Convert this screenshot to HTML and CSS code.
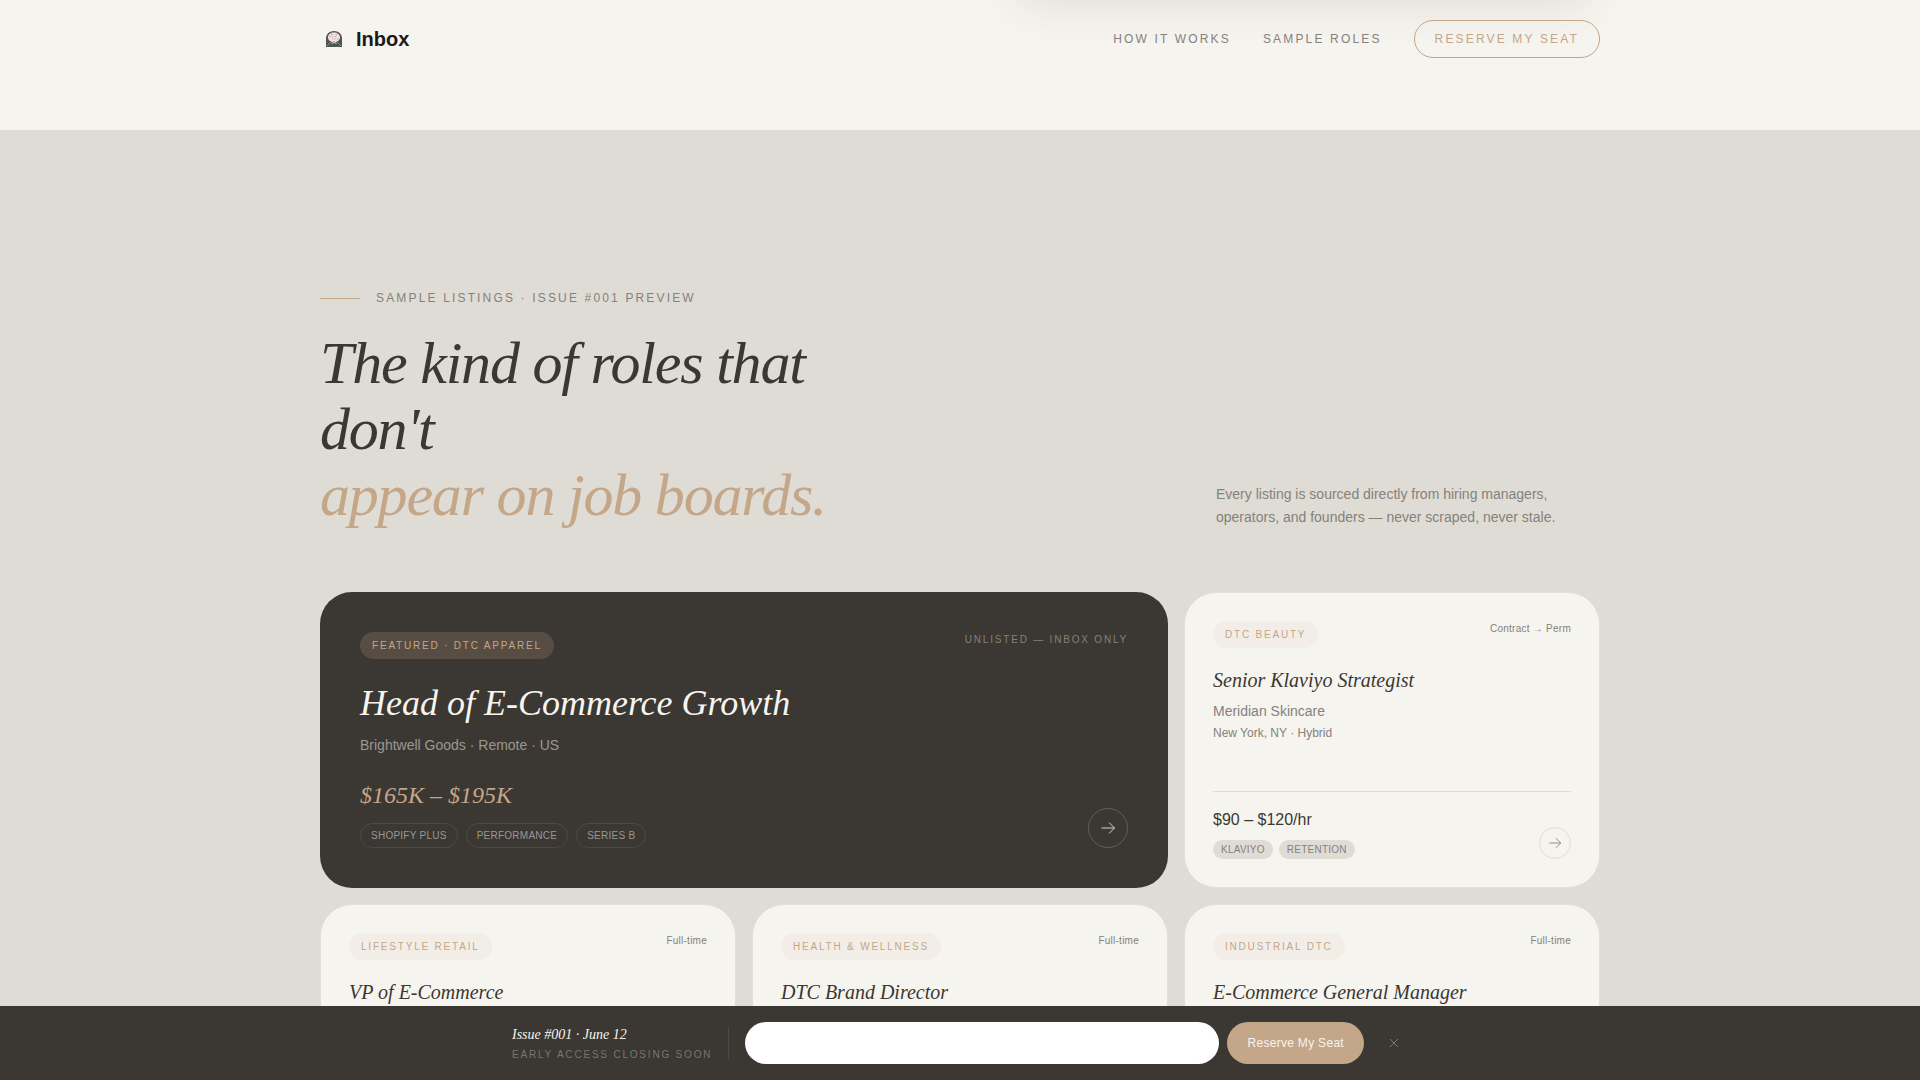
FILE: index.html
```html
<!DOCTYPE html>
<html lang="en">
<head>
    <meta charset="UTF-8">
    <meta name="viewport" content="width=device-width, initial-scale=1.0">
    <title>Inbox</title>
    <link rel="stylesheet" href="styles.css">
</head>
<body>
    <div class="hero-end"></div>

    <header class="site-header">
        <div class="container header-row">
            <a class="logo" href="#">
                <svg class="logo-mark" viewBox="0 0 16 16" aria-hidden="true">
                    <path d="M0 16V7.500C0 3 3.500 0 8 0s8 3 8 7.500V16z" fill="#505452"/>
                    <path d="M2 6.500C2 3.500 4.500 1.500 8 1.500s6 2 6 5c0 2-1.500 3.500-3 4L8 12l-3-1.500c-1.500-.5-3-2-3-4z" fill="#ebe6e4"/>
                    <path d="M5 3.500h2M9.500 3.500h2M3.500 5.500h1.500M6 7.500h1M11 8h1.500M7 10.500h2" stroke="#dc9aa6" stroke-width="1"/>
                    <path d="M6.500 5.500h1M9 5.500h1.500M8.500 8h1" stroke="#a9a7a6" stroke-width="1"/>
                    <path d="M1 15l4-4M15 15l-4-4" fill="none" stroke="#8b8f8c" stroke-width="1"/>
                    <path d="M5.500 12.500L8 11.500l2.500 1" fill="none" stroke="#c9c4c2" stroke-width="1"/>
                </svg>
                <span>Inbox</span>
            </a>
            <nav class="nav">
                <a href="#how">How it works</a>
                <a href="#roles">Sample roles</a>
                <a class="nav-cta" href="#reserve">Reserve my seat</a>
            </nav>
        </div>
    </header>

    <main class="listings" id="roles">
        <div class="container">
            <p class="eyebrow">Sample Listings · Issue #001 Preview</p>
            <div class="intro">
                <h1 class="headline">The kind of roles that don't <span class="accent">appear on job boards.</span></h1>
                <p class="intro-text">Every listing is sourced directly from hiring managers, operators, and founders — never scraped, never stale.</p>
            </div>

            <div class="grid">
                <article class="card card-featured">
                    <div class="card-top">
                        <span class="badge">Featured · DTC Apparel</span>
                        <span class="unlisted">Unlisted — Inbox only</span>
                    </div>
                    <h2 class="role">Head of E-Commerce Growth</h2>
                    <p class="company">Brightwell Goods · Remote · US</p>
                    <div class="card-foot">
                        <div>
                            <p class="pay">$165K – $195K</p>
                            <ul class="tags">
                                <li>Shopify Plus</li>
                                <li>Performance</li>
                                <li>Series B</li>
                            </ul>
                        </div>
                        <a class="arrow" href="#reserve" aria-label="Head of E-Commerce Growth">
                            <svg viewBox="0 0 16 16"><path d="M1.500 8h13M9 2.500L14.500 8 9 13.500"/></svg>
                        </a>
                    </div>
                </article>

                <article class="card">
                    <div class="card-top">
                        <span class="badge">DTC Beauty</span>
                        <span class="type">Contract → Perm</span>
                    </div>
                    <h2 class="role">Senior Klaviyo Strategist</h2>
                    <p class="company">Meridian Skincare</p>
                    <p class="place">New York, NY · Hybrid</p>
                    <div class="card-foot">
                        <div>
                            <p class="pay">$90 – $120/hr</p>
                            <ul class="tags">
                                <li>Klaviyo</li>
                                <li>Retention</li>
                            </ul>
                        </div>
                        <a class="arrow" href="#reserve" aria-label="Senior Klaviyo Strategist">
                            <svg viewBox="0 0 16 16"><path d="M1.500 8h13M9 2.500L14.500 8 9 13.500"/></svg>
                        </a>
                    </div>
                </article>

                <article class="card">
                    <div class="card-top">
                        <span class="badge">Lifestyle Retail</span>
                        <span class="type">Full-time</span>
                    </div>
                    <h2 class="role">VP of E-Commerce</h2>
                </article>

                <article class="card">
                    <div class="card-top">
                        <span class="badge">Health &amp; Wellness</span>
                        <span class="type">Full-time</span>
                    </div>
                    <h2 class="role">DTC Brand Director</h2>
                </article>

                <article class="card">
                    <div class="card-top">
                        <span class="badge">Industrial DTC</span>
                        <span class="type">Full-time</span>
                    </div>
                    <h2 class="role">E-Commerce General Manager</h2>
                </article>
            </div>
        </div>
    </main>

    <div class="signup-bar" id="reserve">
        <form class="signup">
            <div class="signup-text">
                <p class="issue">Issue #001 · June 12</p>
                <p class="closing">Early access closing soon</p>
            </div>
            <span class="divider"></span>
            <input class="email" type="email" aria-label="Email address">
            <button class="reserve" type="submit">Reserve My Seat</button>
            <button class="close" type="button" aria-label="Close">
                <svg viewBox="0 0 10 10"><path d="M1 1l8 8M9 1L1 9"/></svg>
            </button>
        </form>
    </div>
</body>
</html>
```
FILE: styles.css
```css
* {
    box-sizing: border-box;
}
body {
    margin: 0;
    background-color: #f6f4ef;
    color: #3b3732;
    font-family: "Liberation Sans", Arial, sans-serif;
    font-size: 14px;
}
h1, h2, p, ul {
    margin: 0;
    padding: 0;
    font-weight: 400;
}
a {
    color: inherit;
    text-decoration: none;
}
.container {
    max-width: 1280px;
    margin: 0 auto;
}

.hero-end {
    position: absolute;
    top: -60px;
    left: 50%;
    width: 576px;
    height: 48px;
    margin-left: 56px;
    border-radius: 24px;
    box-shadow: 0 12px 48px rgba(59, 55, 50, 0.14);
}

/* header */
.site-header {
    position: relative;
    padding: 20px 0 72px;
}
.header-row {
    display: flex;
    align-items: center;
    justify-content: space-between;
}
.logo {
    display: flex;
    align-items: center;
    gap: 14px;
    padding-left: 6px;
    font-size: 20px;
    font-weight: 700;
    color: #1c1a18;
}
.logo-mark {
    width: 16px;
    height: 16px;
}
.nav {
    display: flex;
    align-items: center;
    gap: 32px;
    font-size: 12px;
    line-height: 16px;
    letter-spacing: 0.18em;
    text-transform: uppercase;
    color: #85817b;
}
.nav-cta {
    padding: 10px 20px;
    border: 1px solid #c4a688;
    border-radius: 20px;
    color: #c4a688;
}

/* listings */
.listings {
    padding: 160px 0;
    background-color: #dfdcd5;
}
.eyebrow {
    display: flex;
    align-items: center;
    gap: 16px;
    margin-bottom: 24px;
    font-size: 12px;
    line-height: 16px;
    letter-spacing: 0.18em;
    text-transform: uppercase;
    color: #85817b;
}
.eyebrow::before {
    content: "";
    width: 40px;
    height: 1px;
    background-color: #c4a688;
}
.intro {
    display: flex;
    align-items: flex-end;
    justify-content: space-between;
    margin-bottom: 64px;
}
.headline {
    max-width: 576px;
    font-family: "Liberation Serif", "Times New Roman", serif;
    font-size: 60px;
    font-style: italic;
    line-height: 66px;
    letter-spacing: -0.02em;
}
.accent {
    display: block;
    color: #c4a688;
}
.intro-text {
    max-width: 384px;
    line-height: 1.6;
    color: #85817b;
}

/* cards */
.grid {
    display: grid;
    grid-template-columns: repeat(3, 1fr);
    grid-auto-rows: minmax(296px, auto);
    gap: 16px;
}
.card {
    display: flex;
    flex-direction: column;
    padding: 28px;
    border: 1px solid #e2dfd9;
    border-radius: 32px;
    background-color: #f6f4ef;
}
.card-top {
    display: flex;
    align-items: flex-start;
    justify-content: space-between;
    margin-bottom: 20px;
    font-size: 10px;
    line-height: 15px;
    color: #85817b;
}
.badge {
    padding: 6px 12px;
    border-radius: 14px;
    background-color: #f2eee7;
    letter-spacing: 0.18em;
    text-transform: uppercase;
    color: #c4a688;
}
.type {
    letter-spacing: 0.025em;
}
.role {
    margin-bottom: 8px;
    font-family: "Liberation Serif", "Times New Roman", serif;
    font-size: 20px;
    font-style: italic;
    line-height: 24px;
}
.company {
    line-height: 22px;
    color: #85817b;
}
.place {
    margin-top: 2px;
    font-size: 12px;
    line-height: 18px;
    color: #85817b;
}
.card-foot {
    display: flex;
    align-items: flex-end;
    justify-content: space-between;
    margin-top: auto;
    padding-top: 16px;
    border-top: 1px solid #dfdcd5;
}
.pay {
    margin-bottom: 8px;
    font-size: 16px;
    line-height: 24px;
}
.tags {
    display: flex;
    gap: 6px;
    list-style: none;
    font-size: 10px;
    line-height: 15px;
    letter-spacing: 0.025em;
    text-transform: uppercase;
    color: #85817b;
}
.tags li {
    padding: 2px 8px;
    border-radius: 14px;
    background-color: #dfdcd5;
}
.arrow {
    display: flex;
    align-items: center;
    justify-content: center;
    width: 32px;
    height: 32px;
    border: 1px solid #dfdcd5;
    border-radius: 50%;
    color: #85817b;
}
.arrow svg {
    width: 14px;
    height: 14px;
    fill: none;
    stroke: currentColor;
    stroke-width: 1;
}

/* featured card */
.card-featured {
    grid-column: span 2;
    padding: 40px;
    border: none;
    background-color: #3b3732;
    color: #f6f4ef;
}
.card-featured .card-top {
    margin-bottom: 24px;
}
.card-featured .badge {
    background-color: #574d43;
}
.unlisted {
    letter-spacing: 0.18em;
    text-transform: uppercase;
}
.card-featured .role {
    margin-bottom: 10px;
    font-size: 36px;
    line-height: 40px;
}
.card-featured .company {
    line-height: 24px;
    color: #9a9792;
}
.card-featured .card-foot {
    padding-top: 0;
    border-top: none;
}
.card-featured .pay {
    margin-bottom: 14px;
    font-family: "Liberation Serif", "Times New Roman", serif;
    font-size: 24px;
    font-style: italic;
    line-height: 28px;
    color: #c4a688;
}
.card-featured .tags {
    gap: 8px;
    color: #9a9792;
}
.card-featured .tags li {
    padding: 4px 10px;
    border: 1px solid #4d4944;
    background-color: transparent;
}
.card-featured .arrow {
    width: 40px;
    height: 40px;
    border-color: #625e59;
    color: #d5d2cb;
}
.card-featured .arrow svg {
    width: 16px;
    height: 16px;
}

/* signup bar */
.signup-bar {
    position: fixed;
    right: 0;
    bottom: 0;
    left: 0;
    padding: 16px;
    background-color: #3b3732;
}
.signup {
    display: flex;
    align-items: center;
    max-width: 896px;
    margin: 0 auto;
}
.issue {
    margin-bottom: 2px;
    font-family: "Liberation Serif", "Times New Roman", serif;
    font-style: italic;
    line-height: 20px;
    color: #f6f4ef;
}
.closing {
    font-size: 10px;
    line-height: 15px;
    letter-spacing: 0.18em;
    text-transform: uppercase;
    color: #79756f;
}
.divider {
    width: 1px;
    height: 32px;
    margin: 0 16px;
    background-color: #4d4944;
}
.email {
    flex: 1;
    height: 42px;
    padding: 0 20px;
    border: none;
    border-radius: 21px;
    background-color: #fff;
    font: inherit;
}
.reserve {
    height: 42px;
    margin-left: 8px;
    padding: 0 20px;
    border: none;
    border-radius: 21px;
    background-color: #c4a688;
    color: #f6f4ef;
    font-family: inherit;
    font-size: 12px;
    letter-spacing: 0.025em;
    cursor: pointer;
}
.close {
    display: flex;
    align-items: center;
    justify-content: center;
    width: 28px;
    height: 28px;
    margin-left: 16px;
    padding: 0;
    border: none;
    background: none;
    color: #79756f;
    cursor: pointer;
}
.close svg {
    width: 10px;
    height: 10px;
    stroke: currentColor;
    stroke-width: 1;
}
```
